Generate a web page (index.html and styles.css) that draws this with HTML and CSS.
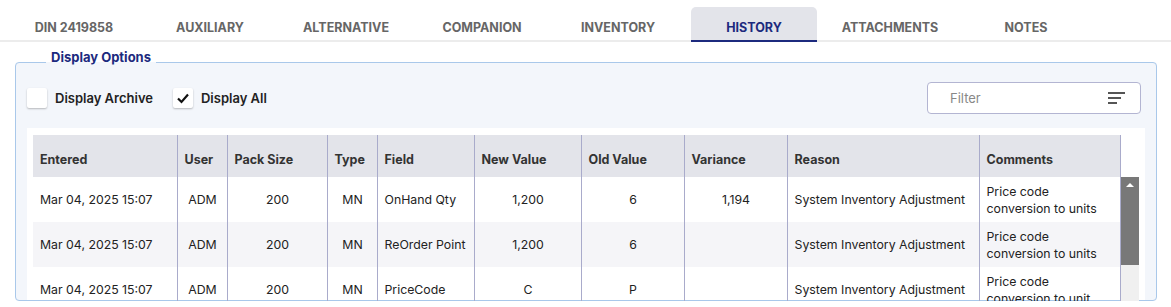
FILE: index.html
```html
<!DOCTYPE html>
<html lang="en">
  <head>
    <meta charset="UTF-8" />
    <meta name="viewport" content="width=device-width, initial-scale=1.0" />
    <title>History</title>
    <link rel="stylesheet" href="styles.css">
  </head>
  <body>
    <div class="tabs">
      <div class="tab">DIN 2419858</div>
      <div class="tab">AUXILIARY</div>
      <div class="tab">ALTERNATIVE</div>
      <div class="tab">COMPANION</div>
      <div class="tab">INVENTORY</div>
      <div class="tab active">HISTORY</div>
      <div class="tab">ATTACHMENTS</div>
      <div class="tab">NOTES</div>
    </div>

    <fieldset class="options">
      <legend>Display Options</legend>

      <div class="toolbar">
        <label class="check">
          <span class="box"></span>
          Display Archive
        </label>
        <label class="check">
          <span class="box">
            <svg width="14" height="14" viewBox="0 0 14 14">
              <path d="M2 7.5 L5.5 11 L12 3.5" fill="none" stroke="#111" stroke-width="2.2" />
            </svg>
          </span>
          Display All
        </label>

        <div class="filter">
          <span class="placeholder">Filter</span>
          <svg width="18" height="14" viewBox="0 0 18 14">
            <rect x="0" y="1" width="17" height="2" fill="#555" />
            <rect x="0" y="6" width="13" height="2" fill="#555" />
            <rect x="0" y="11" width="9" height="2" fill="#555" />
          </svg>
        </div>
      </div>

      <div class="grid-box">
        <table class="grid">
          <colgroup>
            <col style="width: 144px" />
            <col style="width: 50px" />
            <col style="width: 100px" />
            <col style="width: 50px" />
            <col style="width: 97px" />
            <col style="width: 107px" />
            <col style="width: 103px" />
            <col style="width: 103px" />
            <col style="width: 192px" />
            <col style="width: 141px" />
          </colgroup>
          <thead>
            <tr>
              <th>Entered</th>
              <th>User</th>
              <th>Pack Size</th>
              <th>Type</th>
              <th>Field</th>
              <th>New Value</th>
              <th>Old Value</th>
              <th>Variance</th>
              <th>Reason</th>
              <th>Comments</th>
            </tr>
          </thead>
          <tbody>
            <tr>
              <td>Mar 04, 2025 15:07</td>
              <td class="c">ADM</td>
              <td class="c">200</td>
              <td class="c">MN</td>
              <td class="nw">OnHand Qty</td>
              <td class="c">1,200</td>
              <td class="c">6</td>
              <td class="c">1,194</td>
              <td class="nw">System Inventory Adjustment</td>
              <td>Price code conversion to units</td>
            </tr>
            <tr>
              <td>Mar 04, 2025 15:07</td>
              <td class="c">ADM</td>
              <td class="c">200</td>
              <td class="c">MN</td>
              <td class="nw">ReOrder Point</td>
              <td class="c">1,200</td>
              <td class="c">6</td>
              <td class="c"></td>
              <td class="nw">System Inventory Adjustment</td>
              <td>Price code conversion to units</td>
            </tr>
            <tr>
              <td>Mar 04, 2025 15:07</td>
              <td class="c">ADM</td>
              <td class="c">200</td>
              <td class="c">MN</td>
              <td class="nw">PriceCode</td>
              <td class="c">C</td>
              <td class="c">P</td>
              <td class="c"></td>
              <td class="nw">System Inventory Adjustment</td>
              <td>Price code conversion to unit</td>
            </tr>
          </tbody>
        </table>

        <div class="scrollbar">
          <div class="thumb">
            <svg width="10" height="6" viewBox="0 0 10 6">
              <path d="M1 5 L5 1 L9 5 Z" fill="#fff" />
            </svg>
          </div>
        </div>
      </div>
    </fieldset>
  </body>
</html>
```

FILE: styles.css
```css
body {
  margin: 0;
  background-color: white;
  font-family: Inter, "Noto Sans", sans-serif;
  font-size: 12.3px;
  color: #222;
}

.tabs {
  display: flex;
  align-items: flex-end;
  gap: 10px;
  height: 40px;
  padding-left: 11px;
  border-bottom: 2px solid #ececec;
}

.tab {
  width: 126px;
  height: 35px;
  margin-bottom: -2px;
  padding-top: 7px;
  border-bottom: 2px solid transparent;
  border-radius: 5px 5px 0 0;
  box-sizing: border-box;
  display: flex;
  align-items: center;
  justify-content: center;
  font-size: 12.5px;
  font-weight: 700;
  color: #666;
}

.tab.active {
  background-color: #e3e4ea;
  border-bottom-color: #1c2a7e;
  color: #1c2a7e;
}

.options {
  margin: 7px 14px 0 15px;
  padding: 7px 11px 0 11px;
  border: 1px solid #a9c8ea;
  border-radius: 4px;
  background-color: #f3f6fb;
  min-width: 0;
}

.options legend {
  margin-left: 19px;
  padding: 0 5px 10px 5px;
  line-height: 16px;
  font-size: 13px;
  font-weight: 700;
  color: #1c2a7e;
}

.toolbar {
  display: flex;
  align-items: center;
  height: 32px;
  margin-right: 4px;
}

.check {
  display: flex;
  align-items: center;
  gap: 8px;
  margin-right: 20px;
  font-size: 13px;
  font-weight: 600;
  color: #222;
}

.check .box {
  width: 20px;
  height: 20px;
  display: flex;
  align-items: center;
  justify-content: center;
  background-color: white;
  border-radius: 2px;
  box-shadow: 0 1px 2px rgba(0, 0, 0, 0.25);
}

.filter {
  margin-left: auto;
  width: 214px;
  height: 32px;
  box-sizing: border-box;
  display: flex;
  align-items: center;
  justify-content: space-between;
  padding: 0 14px 0 22px;
  background-color: white;
  border: 1px solid #b3b5d2;
  border-radius: 4px;
  font-size: 13px;
}

.filter .placeholder {
  color: #888;
}

.grid-box {
  display: flex;
  align-items: flex-start;
  margin-top: 14px;
  padding: 7px 6px 0 6px;
  background-color: white;
  height: 172px;
  box-sizing: border-box;
}

.grid {
  width: 1087px;
  table-layout: fixed;
  border-collapse: collapse;
}

.grid th,
.grid td {
  border-right: 1px solid #a9abcb;
  text-align: left;
  vertical-align: middle;
  box-sizing: border-box;
}

.grid th {
  height: 42px;
  padding: 6px 7px 0 7px;
  background-color: #e3e4ea;
  font-size: 12.5px;
  font-weight: 700;
  color: #333;
}

.grid td {
  height: 45px;
  padding: 0 6px 0 7px;
  line-height: 17px;
}

.grid td.nw {
  white-space: nowrap;
}

.grid tbody tr:nth-child(even) td {
  background-color: #f5f5f8;
}

.grid td.c {
  text-align: center;
}

.scrollbar {
  width: 18px;
  height: 140px;
  margin-top: 42px;
  background-color: #f0f0f0;
}

.scrollbar .thumb {
  height: 88px;
  background-color: #787878;
  display: flex;
  justify-content: center;
  padding-top: 5px;
  box-sizing: border-box;
}
```
